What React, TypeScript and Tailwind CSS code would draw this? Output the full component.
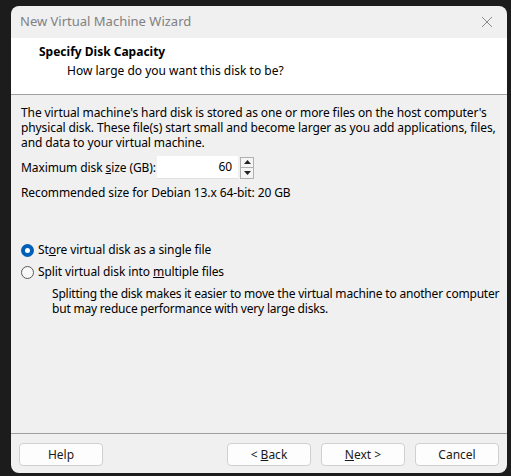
import React from "react";

const font = { fontFamily: '"Segoe UI", "Noto Sans", sans-serif' };

function Btn({ children, w = "w-[84px]" }: { children: React.ReactNode; w?: string }) {
  return (
    <div className={`${w} h-[23px] rounded-[4px] border border-[#d0d0d0] bg-[#fdfdfd] flex items-center justify-center text-[12px] text-[#1a1a1a]`}>
      {children}
    </div>
  );
}

export default function App() {
  return (
    <div className="w-[511px] h-[476px] bg-[#1c1c1c] pt-[6px] pl-[11px] pr-[4px] pb-[3px]" style={font}>
      <div className="h-full rounded-[8px] bg-[#f0f0f0] flex flex-col overflow-hidden">
        {/* title bar */}
        <div className="h-[32px] flex items-center justify-between pl-[9px] pr-[12px] shrink-0">
          <span className="text-[13px] text-[#808080]">New Virtual Machine Wizard</span>
          <svg width="12" height="12" viewBox="0 0 12 12" className="mr-[2px]">
            <path d="M1 1 L11 11 M11 1 L1 11" stroke="#8a8a8a" strokeWidth="1" />
          </svg>
        </div>
        {/* header */}
        <div className="h-[57px] bg-white border-b border-[#a0a0a0] shrink-0 pt-[6px]">
          <div className="pl-[28px] text-[12px] font-bold text-black leading-[16px]">Specify Disk Capacity</div>
          <div className="pl-[56px] text-[12px] text-black leading-[16px] mt-[3px]">How large do you want this disk to be?</div>
        </div>
        {/* body */}
        <div className="flex-1 pl-[10px] pr-[5px] pt-[10px] text-[12px] text-black tracking-[-0.1px]">
          <div className="leading-[15px] whitespace-nowrap">
            <div>The virtual machine's hard disk is stored as one or more files on the host computer's</div>
            <div>physical disk. These file(s) start small and become larger as you add applications, files,</div>
            <div>and data to your virtual machine.</div>
          </div>
          <div className="flex items-center mt-[6px]">
            <span className="w-[136px] whitespace-nowrap">
              Maximum disk <span className="underline">s</span>ize (GB):
            </span>
            <div className="w-[81px] h-[23px] bg-white border-b border-[#e0e0e0] flex items-center justify-end pr-[6px] text-[12px]">60</div>
            <div className="flex flex-col ml-[2px]">
              <div className="w-[14px] h-[11px] border border-[#b0b0b0] bg-[#f5f5f5] flex items-center justify-center">
                <svg width="7" height="4" viewBox="0 0 7 4"><path d="M0 4 L3.5 0 L7 4 Z" fill="#222" /></svg>
              </div>
              <div className="w-[14px] h-[11px] border border-t-0 border-[#b0b0b0] bg-[#f5f5f5] flex items-center justify-center">
                <svg width="7" height="4" viewBox="0 0 7 4"><path d="M0 0 L3.5 4 L7 0 Z" fill="#222" /></svg>
              </div>
            </div>
          </div>
          <div className="mt-[6px] leading-[16px]">Recommended size for Debian 13.x 64-bit: 20 GB</div>

          <div className="mt-[41px] flex items-center gap-[4px]">
            <div className="w-[13px] h-[13px] rounded-full bg-[#005fb8] flex items-center justify-center">
              <div className="w-[5px] h-[5px] rounded-full bg-white" />
            </div>
            <span className="leading-[16px]">
              St<span className="underline">o</span>re virtual disk as a single file
            </span>
          </div>
          <div className="mt-[6px] flex items-center gap-[4px]">
            <div className="w-[13px] h-[13px] rounded-full border border-[#5a5a5a] bg-[#f8f8f8]" />
            <span className="leading-[16px]">
              Split virtual disk into <span className="underline">m</span>ultiple files
            </span>
          </div>
          <div className="pl-[31px] mt-[6px] leading-[15px] whitespace-nowrap tracking-[-0.2px]">
            <div>Splitting the disk makes it easier to move the virtual machine to another computer</div>
            <div>but may reduce performance with very large disks.</div>
          </div>
        </div>
        {/* footer */}
        <div className="h-[40px] border-t border-[#a0a0a0] shrink-0 flex items-start pt-[9px] pl-[8px] pr-[8px]">
          <Btn>Help</Btn>
          <div className="flex-1" />
          <div className="flex gap-[10px]">
            <Btn>
              &lt; <span className="underline ml-[3px]">B</span>ack
            </Btn>
            <Btn>
              <span className="underline">N</span>ext &gt;
            </Btn>
            <Btn>Cancel</Btn>
          </div>
        </div>
      </div>
    </div>
  );
}
